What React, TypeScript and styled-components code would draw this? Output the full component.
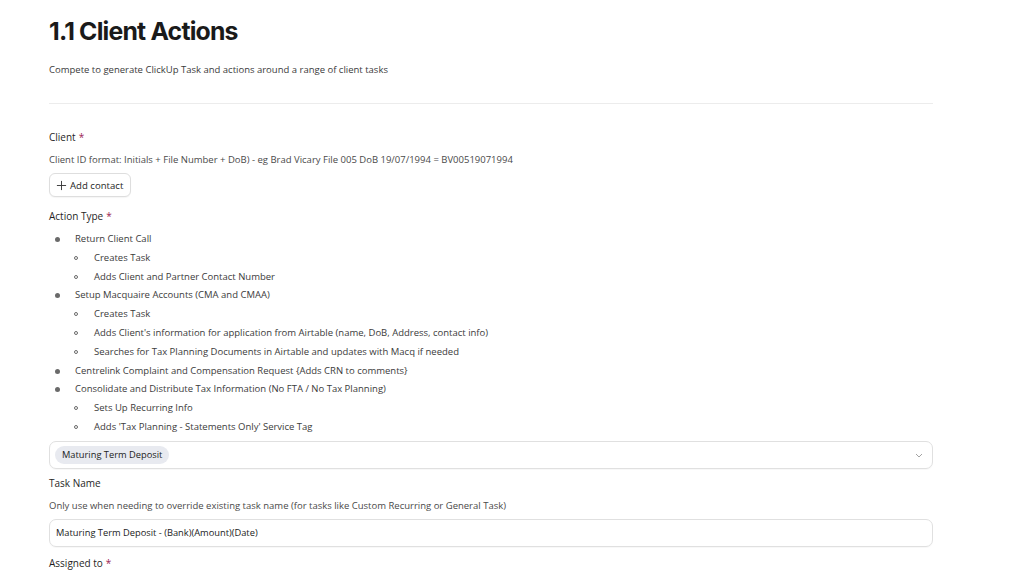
import React from 'react';
import styled, {createGlobalStyle} from 'styled-components';

const GlobalStyle = createGlobalStyle`
  body {
    margin: 0;
    background: #ffffff;
    font-family: "Open Sans", "Noto Sans", sans-serif;
    color: #1f1f1f;
  }
`;

const Page = styled.div`
  padding: 15px 0 0 49px;
  width: 884px;
`;

const Title = styled.h1`
  margin: 0;
  font-family: Inter, sans-serif;
  font-weight: 700;
  font-size: 24.8px;
  letter-spacing: -0.8px;
  line-height: 32px;
  color: #1a1a1a;
`;

const Subtitle = styled.p`
  margin: 16px 0 0;
  font-size: 9.5px;
  line-height: 14px;
  color: #3b3b3b;
`;

const Divider = styled.hr`
  border: 0;
  border-top: 1px solid #ececec;
  margin: 26px 0 0;
`;

const Field = styled.div<{$top: number}>`
  margin-top: ${p => p.$top}px;
  display: flex;
  flex-direction: column;
`;

const Label = styled.div`
  font-size: 10px;
  line-height: 14px;
  color: #1f1f1f;
`;

const Required = styled.span`
  color: #9b1b52;
  margin-left: 3px;
`;

const Help = styled.div`
  margin-top: 9px;
  font-size: 9.5px;
  line-height: 14px;
  color: #4a4a4a;
`;

const AddButton = styled.button`
  margin-top: 6px;
  align-self: flex-start;
  display: flex;
  align-items: center;
  gap: 3px;
  height: 24px;
  padding: 0 7px 0 6px;
  background: #fff;
  border: 1px solid #dedede;
  border-radius: 6px;
  box-shadow: 0 1px 1px rgba(0, 0, 0, 0.04);
  font-family: "Open Sans", sans-serif;
  font-size: 9.6px;
  color: #1f1f1f;
`;

const List = styled.ul<{$nested?: boolean}>`
  margin: ${p => (p.$nested ? '0' : '7px 0 0')};
  padding: 0 0 0 ${p => (p.$nested ? '19px' : '26px')};
  list-style: none;
  font-size: 9.5px;
  line-height: 18.8px;
  color: #3b3b3b;

  > li {
    position: relative;
  }

  > li::before {
    content: '';
    position: absolute;
    top: 7px;
    box-sizing: border-box;
    left: -20px;
    width: ${p => (p.$nested ? '4px' : '5px')};
    height: ${p => (p.$nested ? '4px' : '5px')};
    border-radius: 50%;
    background: ${p => (p.$nested ? 'transparent' : '#6a6a6a')};
    border: ${p => (p.$nested ? '1px solid #6a6a6a' : '0')};
  }
`;

const SelectBox = styled.div`
  margin-top: 4px;
  height: 26px;
  border: 1px solid #e0e0e0;
  border-radius: 7px;
  display: flex;
  align-items: center;
  justify-content: space-between;
  padding: 0 8px 0 5px;
  box-shadow: 0 1px 1px rgba(0, 0, 0, 0.03);
`;

const Chip = styled.span`
  background: #e8eaf0;
  border-radius: 10px;
  padding: 0 7px;
  height: 18px;
  display: flex;
  align-items: center;
  font-size: 9.3px;
  color: #222;
`;

const TextInput = styled.div`
  margin-top: 6px;
  height: 26px;
  border: 1px solid #e0e0e0;
  border-radius: 7px;
  display: flex;
  align-items: center;
  padding: 0 6px;
  font-size: 9.3px;
  color: #222;
  box-shadow: 0 1px 1px rgba(0, 0, 0, 0.03);
`;

function App() {
    return (
        <Page>
            <GlobalStyle/>
            <Title>1.1 Client Actions</Title>
            <Subtitle>Compete to generate ClickUp Task and actions around a range of client tasks</Subtitle>
            <Divider/>

            <Field $top={26}>
                <Label>Client<Required>*</Required></Label>
                <Help>Client ID format: Initials + File Number + DoB) - eg Brad Vicary File 005 DoB 19/07/1994 = BV00519071994</Help>
                <AddButton>
                    <svg width="11" height="11" viewBox="0 0 12 12" fill="none" stroke="#333" strokeWidth="1">
                        <path d="M6 1v10M1 6h10"/>
                    </svg>
                    Add contact
                </AddButton>
            </Field>

            <Field $top={12}>
                <Label>Action Type<Required>*</Required></Label>
                <List>
                    <li>Return Client Call
                        <List $nested>
                            <li>Creates Task</li>
                            <li>Adds Client and Partner Contact Number</li>
                        </List>
                    </li>
                    <li>Setup Macquaire Accounts (CMA and CMAA)
                        <List $nested>
                            <li>Creates Task</li>
                            <li>Adds Client's information for application from Airtable (name, DoB, Address, contact info)</li>
                            <li>Searches for Tax Planning Documents in Airtable and updates with Macq if needed</li>
                        </List>
                    </li>
                    <li>Centrelink Complaint and Compensation Request {'{'}Adds CRN to comments{'}'}</li>
                    <li>Consolidate and Distribute Tax Information (No FTA / No Tax Planning)
                        <List $nested>
                            <li>Sets Up Recurring Info</li>
                            <li>Adds 'Tax Planning - Statements Only' Service Tag</li>
                        </List>
                    </li>
                </List>
                <SelectBox>
                    <Chip>Maturing Term Deposit</Chip>
                    <svg width="10" height="10" viewBox="0 0 10 10" fill="none" stroke="#999" strokeWidth="0.9">
                        <path d="M2 4l3 3 3-3"/>
                    </svg>
                </SelectBox>
            </Field>

            <Field $top={7}>
                <Label>Task Name</Label>
                <Help>Only use when needing to override existing task name (for tasks like Custom Recurring or General Task)</Help>
                <TextInput>Maturing Term Deposit - (Bank)(Amount)(Date)</TextInput>
            </Field>

            <Field $top={9}>
                <Label>Assigned to<Required>*</Required></Label>
            </Field>
        </Page>
    );
}

export default App;
